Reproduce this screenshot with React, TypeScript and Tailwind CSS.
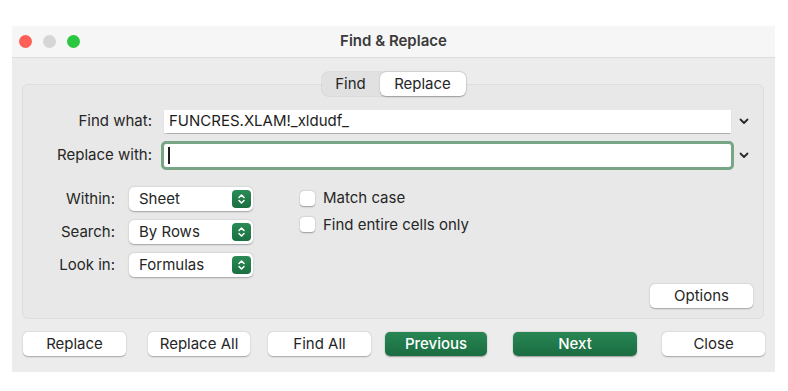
import type { ReactNode } from "react";

const font = { fontFamily: "Inter, 'Noto Sans', 'Liberation Sans', sans-serif" };

const Chevron = () => (
  <svg width="10" height="7" viewBox="0 0 10 7" className="shrink-0">
    <path d="M1.5 1.5 L5 5 L8.5 1.5" fill="none" stroke="#2a2a2a" strokeWidth="1.8" strokeLinecap="round" strokeLinejoin="round" />
  </svg>
);

const Stepper = () => (
  <span className="flex h-[18px] w-[19px] items-center justify-center rounded-[4px] bg-gradient-to-b from-[#2a8a55] to-[#1b6f41]">
    <svg width="9" height="12" viewBox="0 0 9 12">
      <path d="M2 4.5 L4.5 2 L7 4.5 M2 7.5 L4.5 10 L7 7.5" fill="none" stroke="#ffffff" strokeWidth="1.5" strokeLinecap="round" strokeLinejoin="round" />
    </svg>
  </span>
);

const Popup = ({ label, value }: { label: string; value: string }) => (
  <div className="flex h-[24px] flex-row items-center">
    <span className="w-[93px] pr-[14px] text-right text-[15px] text-[#262626]">{label}</span>
    <div className="flex h-[24px] w-[124px] flex-row items-center justify-between rounded-[5px] bg-white pl-[10px] pr-[2px] shadow-[0_0.5px_1.5px_rgba(0,0,0,0.3)]">
      <span className="text-[15px] text-[#262626]">{value}</span>
      <Stepper />
    </div>
  </div>
);

const Check = ({ text }: { text: string }) => (
  <label className="flex flex-row items-center gap-[8px]">
    <span className="h-[15px] w-[15px] rounded-[4px] bg-white shadow-[0_0.5px_1.5px_rgba(0,0,0,0.35)]" />
    <span className="text-[15px] text-[#262626]">{text}</span>
  </label>
);

const Button = ({ children, primary, className }: { children: ReactNode; primary?: boolean; className: string }) => (
  <button
    className={`flex h-[24px] items-center justify-center rounded-[5px] text-[15px] ${
      primary
        ? "bg-gradient-to-b from-[#288654] to-[#1a6d41] font-medium text-white shadow-[0_0.5px_1.5px_rgba(0,0,0,0.35)]"
        : "bg-white text-[#262626] shadow-[0_0.5px_1.5px_rgba(0,0,0,0.3)]"
    } ${className}`}
  >
    {children}
  </button>
);

export default function App() {
  return (
    <div className="h-[391px] w-[788px] bg-white pl-[12px] pt-[26px]" style={font}>
      <div className="flex h-[346px] w-[763px] flex-col bg-[#ececec]">
        {/* title bar */}
        <header className="relative flex h-[32px] shrink-0 flex-row items-center gap-[11px] border-b border-[#dcdcdc] bg-[#f6f6f6] pl-[7px]">
          <span className="h-[13px] w-[13px] rounded-full bg-[#fe5f57]" />
          <span className="h-[13px] w-[13px] rounded-full bg-[#d6d6d6]" />
          <span className="h-[13px] w-[13px] rounded-full bg-[#2ac840]" />
          <h1 className="absolute inset-0 flex items-center justify-center text-[15px] font-semibold text-[#3a3a3a]">
            Find &amp; Replace
          </h1>
        </header>

        <div className="flex flex-col px-[10px] pt-[14px]">
          {/* segmented tabs */}
          <div className="relative z-10 flex h-[24px] flex-row self-center rounded-[6px] bg-[#e1e1e1] shadow-[0_0_0_0.5px_rgba(0,0,0,0.12)]">
            <span className="flex w-[58px] items-center justify-center text-[15px] text-[#262626]">Find</span>
            <span className="flex w-[86px] items-center justify-center rounded-[6px] bg-white text-[15px] text-[#262626] shadow-[0_0.5px_1.5px_rgba(0,0,0,0.3)]">
              Replace
            </span>
          </div>

          {/* group box */}
          <section className="-mt-[12px] flex h-[235px] w-[742px] flex-col rounded-[6px] border border-[#dddddd] bg-[#e8e8e8] pt-[25px]">
            <div className="flex flex-row items-center">
              <span className="w-[131px] pr-[2px] text-right text-[15px] text-[#262626]">Find what:</span>
              <div className="ml-[10px] flex h-[23px] w-[567px] items-center bg-white pl-[5px] text-[15px] text-[#1d1d1d] shadow-[0_0.5px_1px_rgba(0,0,0,0.25)]">
                FUNCRES.XLAM!_xldudf_
              </div>
              <span className="ml-[8px]"><Chevron /></span>
            </div>
            <div className="mt-[11px] flex flex-row items-center">
              <span className="w-[131px] pr-[2px] text-right text-[15px] text-[#262626]">Replace with:</span>
              <div className="ml-[10px] flex h-[23px] w-[567px] items-center rounded-[2px] bg-white pl-[4px] outline outline-[3px] outline-[#78a585]">
                <span className="h-[17px] w-[1.5px] bg-[#1d1d1d]" />
              </div>
              <span className="ml-[8px]"><Chevron /></span>
            </div>

            <div className="mt-[20px] flex flex-row">
              <div className="flex flex-col gap-[9px] pl-[13px]">
                <Popup label="Within:" value="Sheet" />
                <Popup label="Search:" value="By Rows" />
                <Popup label="Look in:" value="Formulas" />
              </div>
              <div className="ml-[47px] flex flex-col gap-[4px]">
                <Check text="Match case" />
                <Check text="Find entire cells only" />
              </div>
            </div>

            <div className="mt-auto mb-[10px] mr-[10px] flex flex-row justify-end">
              <Button className="w-[103px]">Options</Button>
            </div>
          </section>

          {/* action buttons */}
          <div className="mt-[13px] flex flex-row">
            <Button className="ml-[1px] w-[103px]">Replace</Button>
            <Button className="ml-[22px] w-[102px]">Replace All</Button>
            <Button className="ml-[18px] w-[103px]">Find All</Button>
            <Button primary className="ml-[14px] w-[102px]">Previous</Button>
            <Button primary className="ml-[26px] w-[124px]">Next</Button>
            <Button className="ml-[25px] w-[103px]">Close</Button>
          </div>
        </div>
      </div>
    </div>
  );
}
